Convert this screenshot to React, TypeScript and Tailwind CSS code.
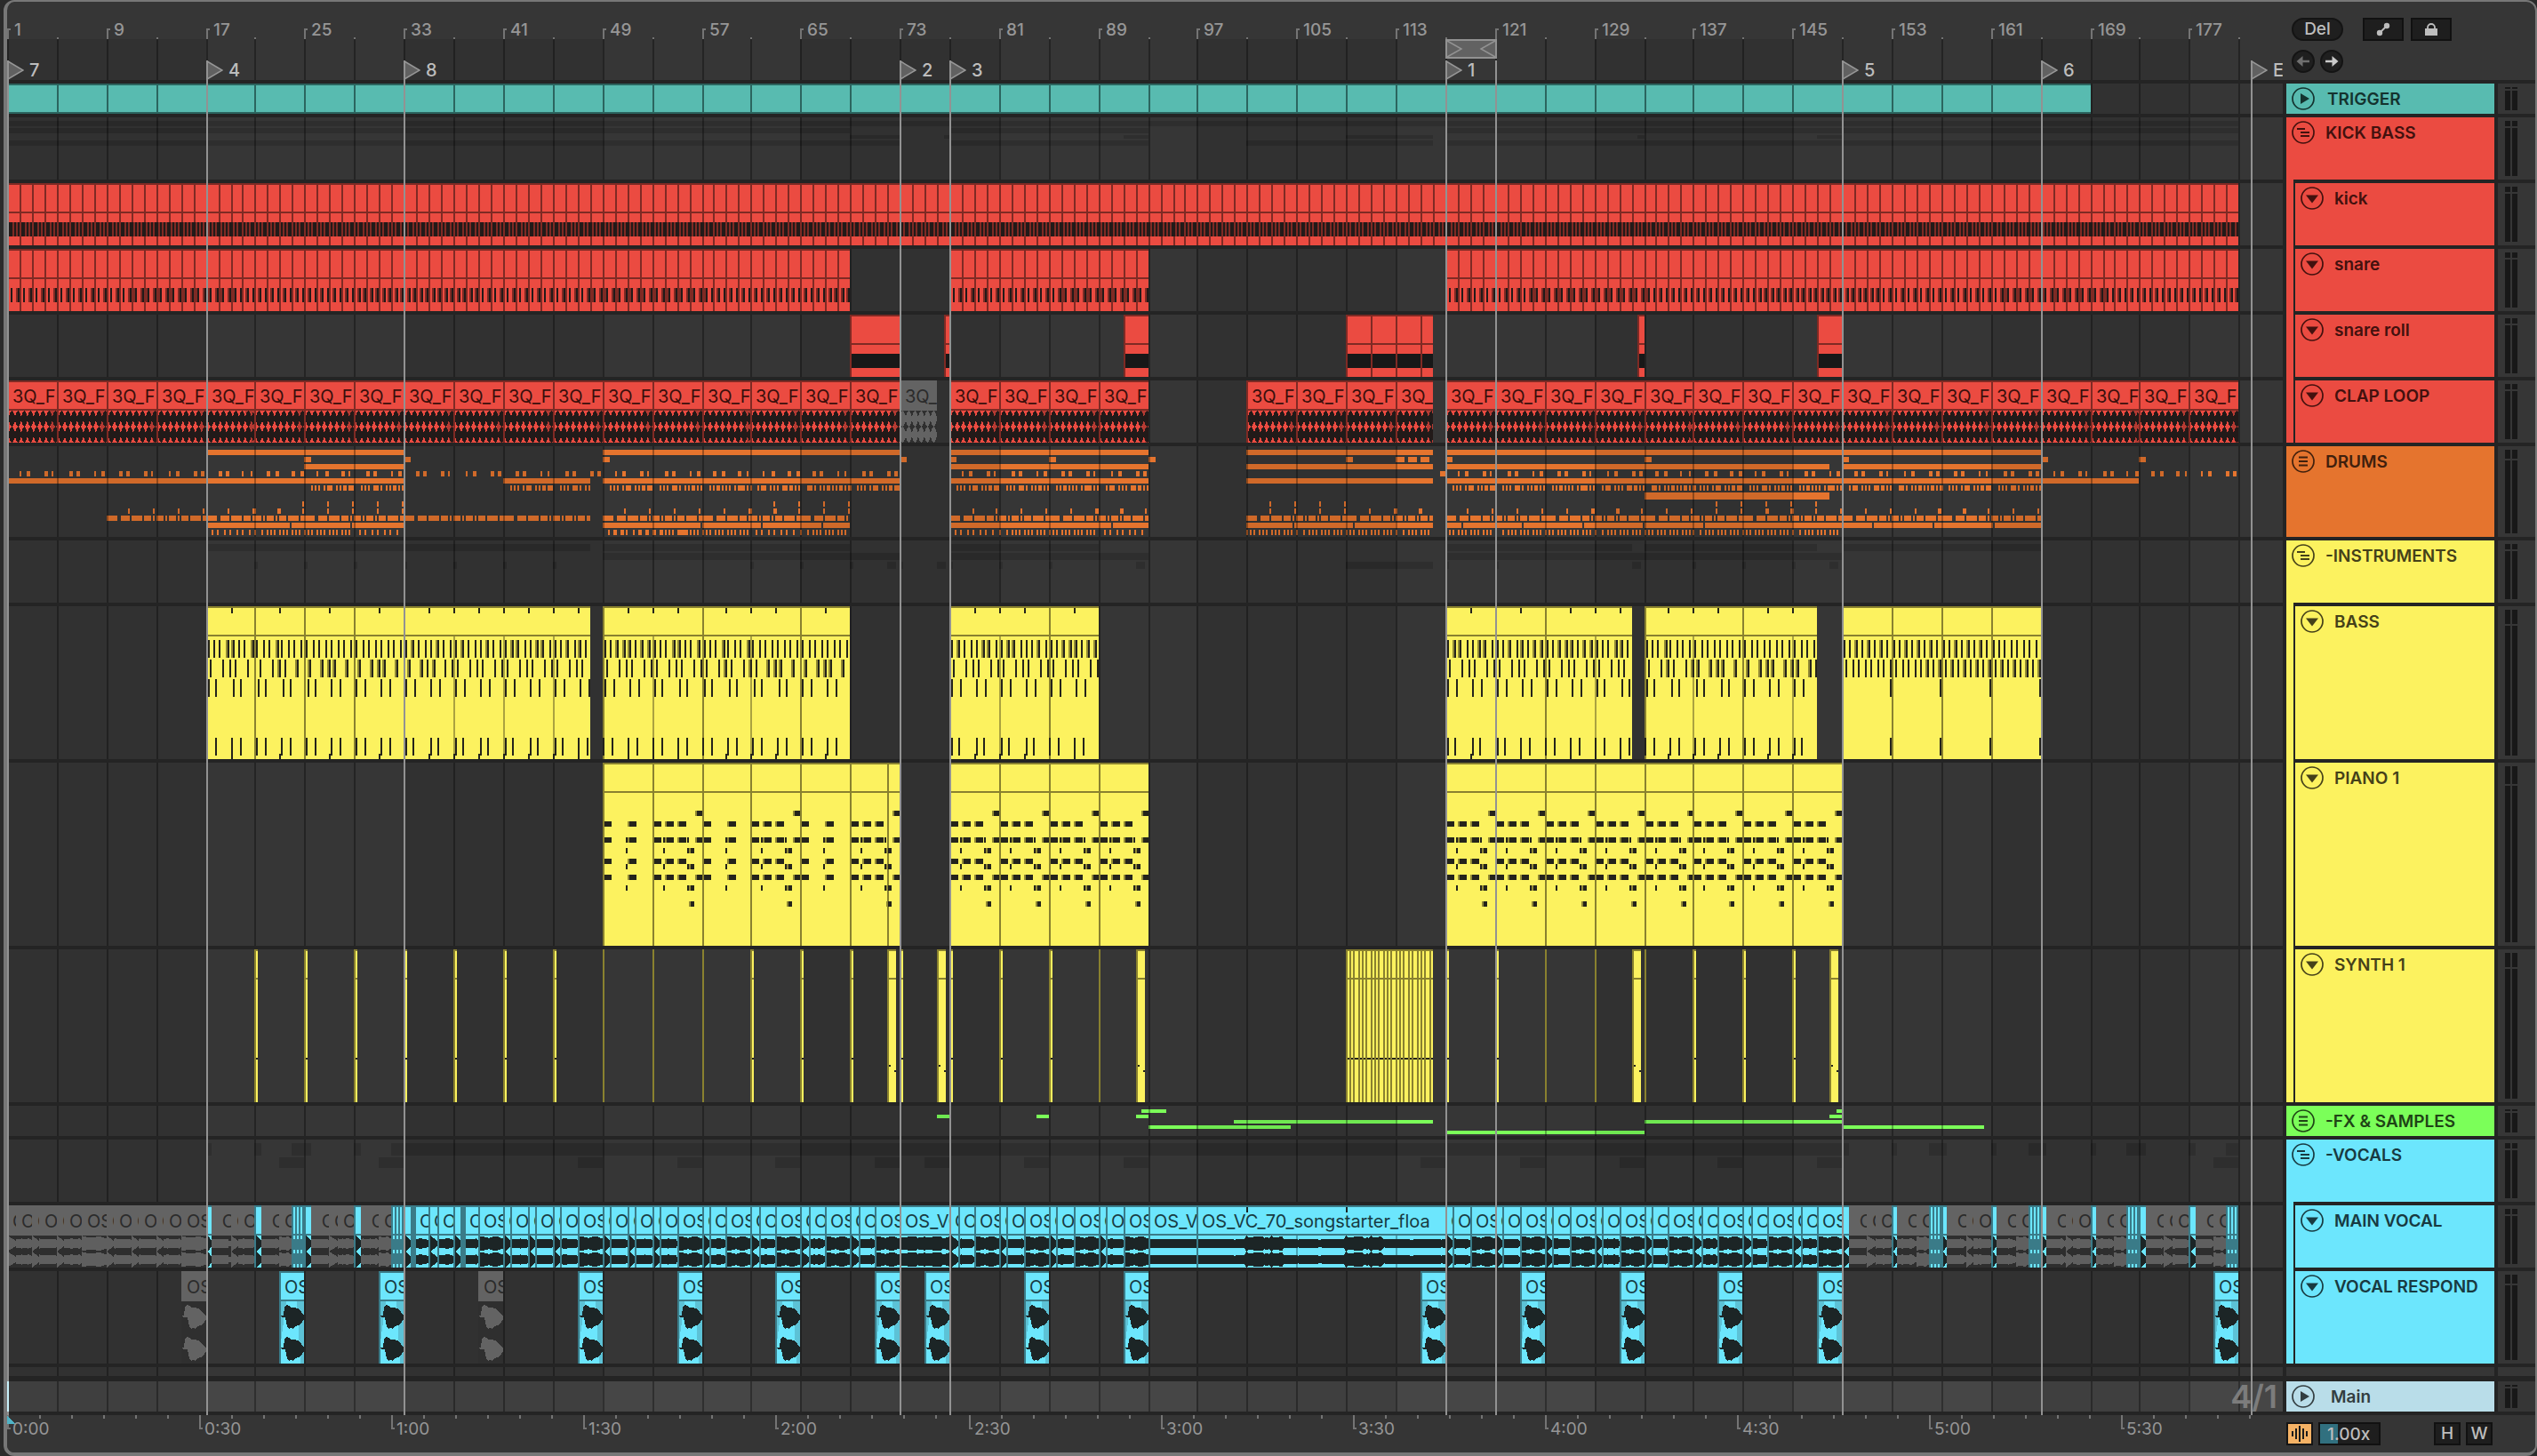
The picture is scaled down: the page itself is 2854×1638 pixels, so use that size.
import React from 'react';

/* ------------------------------------------------------------------ */
/* Timeline geometry                                                   */
/* ------------------------------------------------------------------ */

const LANE = 2560;
const BAR = 13.947;
const LAST_BAR = 181;

const snap = (v: number) => 2 * Math.round(v / 2);
const X = (bar: number) => snap((bar - 1) * BAR);
const pct = (v: number) => `${(v / LANE) * 100}%`;
const rect = (x: number, y: number, w: number, h: number) => `M${x} ${y}h${w}v${h}h${-w}z`;
const span = (a: number, b: number, y: number, h: number) => rect(X(a), y, X(b) - X(a), h);
const range = (from: number, to: number, step: number) => {
  const out: number[] = [];
  for (let v = from; v < to - 0.001; v += step) out.push(v);
  return out;
};

type Layer = { fill: string; d: string; opacity?: number };
type Label = { x: number; w: number; text: string; dim?: boolean };
type LaneArt = { under?: Layer[]; over?: Layer[]; labels?: Label[] };
type Span = [number, number];

const RED = { fill: '#eb4b41', edge: '#7f2a24', note: '#221a19' };
const YELLOW = { fill: '#fcf25f', edge: '#89812f', note: '#24231b' };
const CYAN = { fill: '#6ce6fd', edge: '#3a7b88', note: '#1c2526' };
const GREY = '#636363';

/* Outline of a clip: top edge, left edge and the line below its title. */
const edges = (x: number, w: number, h: number) =>
  rect(x, 0, w, 2) + rect(x, 0, 2, h) + (w > 2 ? rect(x, 32, w, 2) : '');

/* A mirrored waveform around cy. */
const wave = (x0: number, x1: number, cy: number, amp: (t: number, x: number) => number, step = 2) => {
  const top: string[] = [];
  const bottom: string[] = [];
  for (let x = x0; x <= x1; x += step) {
    const a = amp((x - x0) / (x1 - x0), x);
    top.push(`${x} ${(cy - a).toFixed(1)}`);
    bottom.unshift(`${x} ${(cy + a).toFixed(1)}`);
  }
  return `M${top.concat(bottom).join('L')}z`;
};
const jitter = (x: number) => Math.abs(Math.sin(x * 12.9898) * 43758.5453) % 1;

/* ------------------------------------------------------------------ */
/* Lane art                                                            */
/* ------------------------------------------------------------------ */

const trigger = (): LaneArt => {
  const starts = range(1, 169, 4);
  return {
    over: [
      { fill: '#58bbb0', d: span(1, 169, 0, 34) },
      { fill: '#2b655f', d: span(1, 169, 0, 2) + span(1, 169, 32, 2) + starts.map((b) => rect(X(b), 0, 2, 34)).join('') },
    ],
  };
};

const SNARE: Span[] = [[1, 69], [77, 93], [117, 181]];
const ROLLS: Span[] = [[69, 73], [76.6, 77], [91, 93], [109, 111], [111, 113], [113, 115], [115, 116], [132.5, 133], [147, 149]];
const CLAPS: Span[] = [[1, 73], [77, 93], [101, 116], [117, 181]];

const kickGroup = (): LaneArt => ({
  under: [
    {
      fill: '#2e2e2e',
      d:
        span(1, 181, 4, 6) +
        SNARE.map(([a, b]) => span(a, b, 12, 6)).join('') +
        ROLLS.map(([a, b]) => span(a, b, 20, 4)).join('') +
        CLAPS.map(([a, b]) => span(a, b, 26, 6)).join(''),
    },
  ],
});

const hits = (spans: Span[], beats: number[]): LaneArt => {
  let fill = '';
  let edge = '';
  let note = '';
  let noteEdge = '';
  spans.forEach(([a, b]) => {
    fill += span(a, b, 0, 70);
    range(a, b, 1).forEach((bar) => {
      edge += edges(X(bar), X(bar + 1) - X(bar), 70);
      beats.forEach((beat) => {
        const x0 = X(bar + beat / 4);
        const x1 = X(bar + (beat + 1) / 4);
        note += rect(x0, 44, x1 - x0, 16);
        if (x1 - x0 > 2) noteEdge += rect(x0, 44, 2, 16);
      });
    });
  });
  return {
    over: [
      { fill: RED.fill, d: fill },
      { fill: RED.edge, d: edge },
      { fill: RED.note, d: note },
      { fill: RED.edge, d: noteEdge },
    ],
  };
};

const snareRoll = (): LaneArt => ({
  over: [
    { fill: RED.fill, d: ROLLS.map(([a, b]) => span(a, b, 0, 70)).join('') },
    { fill: '#181818', d: ROLLS.map(([a, b]) => span(a, b, 44, 16)).join('') },
    { fill: RED.edge, d: ROLLS.map(([a, b]) => edges(X(a), X(b) - X(a), 70)).join('') },
  ],
});

const clapShape = (x0: number, x1: number) => {
  const shape: Span[] = [[0, 2.5], [0.28, 8], [0.5, 9], [0.74, 7]];
  const half = BAR / 2;
  return [43, 61]
    .map((cy) => {
      const top: string[] = [];
      const bottom: string[] = [];
      for (let s = x0; s < x1; s += half) {
        shape.forEach(([t, a]) => {
          const x = s + t * half;
          if (x <= x1) {
            top.push(`${x.toFixed(1)} ${cy - a}`);
            bottom.unshift(`${x.toFixed(1)} ${cy + a}`);
          }
        });
      }
      top.push(`${x1} ${cy - 4}`);
      bottom.unshift(`${x1} ${cy + 4}`);
      return `M${top.concat(bottom).join('L')}z`;
    })
    .join('');
};

const clapLoop = (): LaneArt => {
  const labels: Label[] = [];
  let edge = '';
  let body = '';
  let fade = '';
  CLAPS.forEach(([a, b]) =>
    range(a, b, 4).forEach((bar) => {
      const x0 = X(bar);
      const x1 = X(Math.min(bar + 4, b));
      edge += edges(x0, x1 - x0, 70);
      body += clapShape(x0 + 2, x1);
      fade += `M${x1 - 10} 34L${x1} 34V70H${x1 - 4}z`;
      labels.push({ x: x0, w: x1 - x0, text: '3Q_F' });
    }),
  );
  labels.push({ x: X(73), w: X(76) - X(73), text: '3Q_F', dim: true });
  return {
    over: [
      { fill: RED.fill, d: CLAPS.map(([a, b]) => span(a, b, 0, 70)).join('') },
      { fill: '#7f2a24', d: fade, opacity: 0.5 },
      { fill: RED.note, d: body },
      { fill: RED.edge, d: edge },
      { fill: GREY, d: span(73, 76, 0, 34) },
      { fill: '#2f2f2f', d: span(73, 76, 34, 36) },
      { fill: GREY, d: clapShape(X(73), X(76)) },
    ],
    labels,
  };
};

const drums = (): LaneArt => {
  let d = '';
  const full = (spans: Span[], y: number, h = 6) => spans.forEach(([a, b]) => (d += span(a, b, y, h)));
  full([[17, 33], [49, 73], [77, 93], [101, 116], [117, 165]], 4);
  [25, 33, 49, 73, 77, 85, 93, 109, 113, 114, 115, 117, 133, 149, 165, 173].forEach((b) => (d += rect(X(b), 12, b > 112.5 && b < 116 ? 10 : 8, 6)));
  full([[25, 33], [77, 93], [101, 116], [117, 148], [149, 165]], 20);
  ([[1, 73], [77, 93], [117, 181]] as Span[]).forEach(([a, b]) =>
    range(a, b, 2).forEach((bar, i) => {
      d += rect(X(bar + 1), 28, i % 3 ? 4 : 2, 6) + rect(X(bar + 1.6), 28, i % 4 === 1 ? 2 : 4, 6);
    }),
  );
  d += rect(X(116.6), 28, 6, 6);
  full([[1, 33], [41, 48], [49, 73], [77, 93], [101, 116], [117, 173]], 36);
  const ticks: Span[] = [[8, 2], [12, 2], [16, 2], [22, 2], [26, 2], [30, 2], [36, 2], [40, 2], [44, 4], [50, 2], [54, 2]];
  ([[25, 33], [41, 48], [49, 73], [77, 93], [117, 165]] as Span[]).forEach(([a, b]) =>
    range(a, b, 4).forEach((bar, i) =>
      ticks.forEach(([o, w], k) => {
        const x = X(bar) + o;
        if (x < X(b)) d += rect(x, 44, (i + k) % 5 === 4 ? 4 : w, 6);
      }),
    ),
  );
  full([[133, 148]], 52, 8);
  [24.8, 26.8, 28.8, 30.8, 32.8, 62.8, 64.8, 66.8, 68.8, 102.8, 104.8, 106.8, 108.8, 138.8, 140.8, 142.8, 144.8, 146.8].forEach(
    (b) => (d += rect(X(b), 62, 2, 6)),
  );
  ([[9, 33], [49, 69], [77, 93], [101, 116], [117, 165]] as Span[]).forEach(([a, b]) =>
    range(a, b, 2).forEach((bar, i) => {
      if (bar + 1.8 < b + 0.1) d += rect(X(bar + 1.8), 70, i % 7 > 4 ? 4 : 2, 6);
    }),
  );
  const dashA: Span[] = [[0, 12], [16, 10], [28, 12], [42, 8], [52, 2]];
  const dashB: Span[] = [[0, 8], [10, 2], [14, 8], [24, 2], [28, 8], [38, 12], [52, 4]];
  ([[9, 48], [49, 69], [77, 93], [101, 116], [117, 165]] as Span[]).forEach(([a, b]) =>
    range(a, b, 4).forEach((bar, i) =>
      (i % 2 ? dashB : dashA).forEach(([o, w]) => {
        const x = X(bar) + o;
        if (x < X(b)) d += rect(x, 78, Math.min(w, X(b) - x), 6);
      }),
    ),
  );
  const cuts = [318, 386, 780, 848, 916, 1242, 1446, 1514, 1636, 1704, 1772, 1840, 1908, 2098, 2166, 2234];
  ([[17, 33], [49, 69], [77, 93], [101, 116], [117, 165]] as Span[]).forEach(([a, b]) => {
    let x = X(a);
    cuts.filter((c) => c > x && c < X(b)).forEach((c) => {
      d += rect(x, 86, c - x, 6);
      x = c + 2;
    });
    d += rect(x, 86, X(b) - x, 6);
  });
  const stepA = [6, 12, 20, 26, 34, 40, 48];
  const stepB = [0, 8, 14, 18, 22, 28, 32, 36, 42, 46, 50];
  const stepC = [0, 4, 8, 14, 18, 22, 28, 32, 36, 42, 46, 50];
  ([[17, 33], [49, 69], [77, 93], [101, 116], [117, 149]] as Span[]).forEach(([a, b]) =>
    range(a, b, 4).forEach((bar, i) =>
      [stepA, stepB, stepC][a > 100 ? 2 - (i % 2) : i % 3].forEach((o) => {
        const x = X(bar) + o;
        if (x < X(b)) d += rect(x, 94, a === 49 && i < 2 && o % 4 === 0 ? 4 : 2, 6);
      }),
    ),
  );
  return { under: [{ fill: '#e5742e', d }] };
};

type BassClip = { a: number; b: number; loops?: number[]; busy?: boolean };
const BASS: BassClip[] = [
  { a: 17, b: 21 }, { a: 21, b: 25 }, { a: 25, b: 29 }, { a: 29, b: 33 },
  { a: 33, b: 48, loops: [37, 41, 45] },
  { a: 49, b: 57, loops: [53] }, { a: 57, b: 65, loops: [61] }, { a: 65, b: 69 },
  { a: 77, b: 85, loops: [81] }, { a: 85, b: 89 },
  { a: 117, b: 121 }, { a: 121, b: 125 }, { a: 125, b: 132, loops: [129] },
  { a: 133, b: 141, loops: [137] }, { a: 141, b: 147, loops: [145] },
  { a: 149, b: 153, busy: true }, { a: 153, b: 157, busy: true }, { a: 157, b: 161, busy: true }, { a: 161, b: 165, busy: true },
];

const bass = (): LaneArt => {
  let note = '';
  let noteEdge = '';
  let loop = '';
  const put = (bar: number, y: number, h: number, len: number, end: number) => {
    const x0 = X(bar);
    const x1 = Math.max(x0 + 2, X(bar + len));
    if (x1 > X(end)) return;
    note += rect(x1 - 2, y, 2, h);
    if (x1 - x0 > 2) noteEdge += rect(x0, y, x1 - x0 - 2, h);
  };
  BASS.forEach(({ a, b, loops, busy }) => {
    (loops ?? []).forEach((l) => (loop += rect(X(l), 34, 2, 138)));
    if (busy) {
      range(a, b, 0.5).forEach((t) => {
        put(t + 0.05, 38, 20, 0.2, b);
        put(t + 0.3, 60, 20, 0.19, b);
      });
      put(b - 0.15, 82, 20, 0.1, b);
      put(b - 0.15, 148, 20, 0.1, b);
      return;
    }
    range(a, b, 2).forEach((t) => {
      [0.1, 0.62, 1.08, 1.68].forEach((o) => put(t + o, 38, 20, 0.19, b));
      [0.3, 1.3, 1.86].forEach((o) => put(t + o, 60, 20, 0.19, b));
      [0.17, 0.84].forEach((o) => put(t + o, 82, 20, 0.12, b));
      [0.1, 0.76].forEach((o) => put(t + o, 148, 20, 0.12, b));
      if (t > a) note += rect(X(t), 2, 2, 6) + rect(X(t), 166, 2, 6);
    });
  });
  return {
    over: [
      { fill: YELLOW.fill, d: BASS.map(({ a, b }) => span(a, b, 0, 172)).join('') },
      { fill: '#aaa240', d: loop },
      { fill: YELLOW.edge, d: BASS.map(({ a, b }) => edges(X(a), X(b) - X(a), 172)).join('') },
      { fill: '#928a35', d: noteEdge },
      { fill: YELLOW.note, d: note },
    ],
  };
};

const PIANO: Span[] = [
  [49, 53], [53, 57], [57, 61], [61, 65], [65, 69], [69, 72], [72, 73],
  [77, 81], [81, 85], [85, 89], [89, 93],
  [117, 121], [121, 125], [125, 129], [129, 133], [133, 137], [137, 141], [141, 145], [145, 149],
];

const piano = (): LaneArt => {
  let note = '';
  let noteEdge = '';
  const put = (x: number, w: number, ys: number[], lead = true) =>
    ys.forEach((y) => {
      note += rect(x, y, w, 6);
      if (lead && w > 3) noteEdge += rect(x, y, 2, 6);
    });
  const chord = [66, 84, 108, 126];
  const low = [96, 114, 138];
  [49, 57, 65].forEach((b) => {
    const x = X(b);
    put(x + 2, 8, chord, false);
    put(x + 28, 10, chord);
    put(x + 26, 2, [84, ...low]);
  });
  [53, 61, 69, 77, 81, 85, 89, 117, 121, 125, 129, 133, 137, 141, 145].forEach((b) => {
    const x = X(b);
    put(x + 2, 8, chord, false);
    put(x + 14, 10, chord);
    put(x + 28, 10, chord);
    put(x + 12, 2, [84, ...low]);
    put(x + 39, 2, [84, ...low]);
    put(x + 41, 6, [...low, 156]);
    put(x + 48, X(b + 4) - x - 48, [54, 84, 126]);
  });
  return {
    over: [
      { fill: YELLOW.fill, d: PIANO.map(([a, b]) => span(a, b, 0, 206)).join('') },
      { fill: YELLOW.edge, d: PIANO.map(([a, b]) => edges(X(a), X(b) - X(a), 206)).join('') },
      { fill: YELLOW.note, d: note },
      { fill: '#928a35', d: noteEdge },
    ],
  };
};

const STABS = [21, 25, 29, 33, 37, 41, 45, 61, 65, 69, 73, 77, 81, 85, 117, 121, 137, 141, 145];
const SLIVERS = [49, 53, 57, 89, 125, 129, 133];
const FILLS = [72, 76, 92, 132, 148];

const synth = (): LaneArt => {
  let fill = '';
  let edge = '';
  let note = '';
  STABS.forEach((b) => {
    fill += rect(X(b), 0, 4, 172);
    edge += edges(X(b), 4, 172);
    note += rect(X(b) + 2, 122, 2, 2);
  });
  SLIVERS.forEach((b) => (edge += rect(X(b), 0, 2, 172)));
  FILLS.forEach((b) => {
    fill += rect(X(b), 0, 10, 172);
    edge += edges(X(b), 10, 172);
    note += rect(X(b) + 2, 130, 2, 2) + rect(X(b) + 8, 136, 2, 2);
  });
  edge += span(109, 116, 0, 172);
  let comb = '';
  range(109, 116, 0.25).forEach((b) => {
    comb += rect(X(b) + 2, 2, 2, 30) + rect(X(b) + 2, 34, 2, 138);
    note += rect(X(b) + 2, 122, 2, 2);
  });
  return {
    over: [
      { fill: YELLOW.fill, d: fill },
      { fill: YELLOW.edge, d: edge },
      { fill: YELLOW.fill, d: comb },
      { fill: YELLOW.note, d: note },
    ],
  };
};

const instruments = (): LaneArt => ({
  under: [
    {
      fill: '#2e2e2e',
      d:
        ([[17, 48], [49, 69], [77, 89], [117, 132], [133, 147], [149, 165]] as Span[]).map(([a, b]) => span(a, b, 4, 8)).join('') +
        ([[49, 73], [77, 93], [117, 149]] as Span[]).map(([a, b]) => span(a, b, 14, 8)).join('') +
        STABS.map((b) => rect(X(b), 24, 4, 8)).join('') +
        FILLS.map((b) => rect(X(b), 24, 10, 8)).join('') +
        span(109, 116, 24, 8),
    },
  ],
});

const fx = (): LaneArt => ({
  under: [
    {
      fill: '#7bff59',
      d:
        span(92.5, 94.5, 4, 4) + span(148.5, 149, 4, 4) +
        ([[76, 77], [84, 85], [92, 93], [148, 149]] as Span[]).map(([a, b]) => span(a, b, 10, 4)).join('') +
        span(100, 116, 16, 4) + span(133, 149, 16, 4) +
        span(93, 104.5, 22, 4) + span(149, 160.5, 22, 4) +
        span(117, 133, 28, 4),
    },
  ],
});

const RESPONDS: { a: number; dim?: boolean }[] = [
  { a: 15, dim: true }, { a: 23 }, { a: 31 }, { a: 39, dim: true }, { a: 47 }, { a: 55 }, { a: 63 }, { a: 71 },
  { a: 75 }, { a: 83 }, { a: 91 }, { a: 115 }, { a: 123 }, { a: 131 }, { a: 139 }, { a: 147 }, { a: 179 },
];

const vocals = (): LaneArt => ({
  under: [
    {
      fill: '#2e2e2e',
      d:
        span(17, 17.5, 4, 14) + span(21, 21.5, 4, 14) + span(24, 25.5, 4, 14) + span(29, 29.5, 4, 14) +
        span(32, 149.5, 4, 14) +
        [153, 161, 169, 177].map((b) => span(b, b + 0.5, 4, 14)).join('') +
        [156, 164, 172].map((b) => span(b, b + 1.5, 4, 14)).join('') +
        span(180, 181, 4, 14) +
        RESPONDS.filter((r) => !r.dim).map(({ a }) => span(a, a + 2, 20, 12)).join(''),
    },
  ],
});

type Shape = 'short' | 'long' | 'full' | 'steady' | 'lead';
type VocalClip = { a: number; b: number; shape: Shape; text: string; dim?: boolean };

const vocalClips = (): { clips: VocalClip[]; stripes: Span[] } => {
  const clips: VocalClip[] = [];
  const stripes: Span[] = [];
  const add = (a: number, b: number, shape: Shape, text: string, dim?: boolean) => clips.push({ a, b, shape, text, dim });
  const pair = (a: number, dim?: boolean) => {
    add(a, a + 0.65, 'short', 'OS', dim);
    add(a + 0.65, a + 2, 'long', 'OS', dim);
  };
  [1, 9].forEach((s) => {
    [0, 2, 4].forEach((o) => pair(s + o, true));
    add(s + 6, s + 8, 'full', 'OS', true);
  });
  [17, 25, 149, 157, 165, 173].forEach((s) => {
    add(s, s + 0.5, 'short', '');
    add(s + 0.5, s + 2, 'long', ' OS', true);
    add(s + 2, s + 2.65, 'short', 'OS', true);
    add(s + 2.65, s + 4, 'long', 'OS', true);
    add(s + 4, s + 4.5, 'short', '');
    add(s + 4.5, s + 6, 'long', ' OS', true);
    add(s + 6, s + 7, 'full', 'OS', true);
    stripes.push([s + 7, s + 8]);
  });
  add(33, 33.6, 'short', '');
  stripes.push([33.6, 33.8]);
  add(33.8, 35, 'long', 'OS');
  pair(35);
  add(37, 37.6, 'short', '');
  stripes.push([37.6, 37.8]);
  add(37.8, 39, 'long', 'OS');
  add(39, 41, 'full', 'OS');
  [41, 49].forEach((s) => {
    [0, 2, 4].forEach((o) => pair(s + o));
    add(s + 6, s + 8, 'full', 'OS');
  });
  [...range(57, 73, 4), ...range(77, 93, 4), ...range(117, 149, 4)].forEach((s) => {
    pair(s);
    add(s + 2, s + 4, 'full', 'OS');
  });
  add(73, 77, 'full', 'OS_VC');
  add(93, 97, 'steady', 'OS_VC');
  add(97, 117, 'lead', 'OS_VC_70_songstarter_floa');
  return { clips, stripes };
};

const vocalAmp = (shape: Shape, x0: number, x1: number) => (t: number, x: number) => {
  const n = jitter(x);
  const swell = (p: number) => {
    const f = ((p % 28) + 28) % 28;
    return f < 2 ? 9 : f < 10 ? 6.5 + n : f < 20 ? 8 + n * 0.6 : 6 + n;
  };
  if (shape === 'short') return Math.max(2.5, 9 - t * 6);
  if (shape === 'long') return 4.6 + n * 1.2 - (t > 0.9 ? 2 : 0);
  if (shape === 'full') return x1 - x0 > 40 ? swell(x - x0) : t < 0.4 ? 8.6 - t * 6 : t < 0.7 ? 6.4 + (t - 0.4) * 7 : 8.4 - (t - 0.7) * 10;
  if (shape === 'steady') return 4.4 + n;
  const rel = x - X(101);
  const rel2 = x - X(109);
  if (rel >= 0 && rel < 42) return swell(rel);
  if (rel2 >= 0 && rel2 < 42) return swell(rel2);
  return 4.4 + n;
};

const mainVocal = (): LaneArt => {
  const { clips, stripes } = vocalClips();
  const labels: Label[] = [];
  const p = { greyHead: '', greyBody: '', greyWave: '', fill: '', edge: '', dark: '', stripe: '' };
  clips.forEach(({ a, b, shape, text, dim }) => {
    const x0 = X(a);
    const x1 = X(b);
    const w = x1 - x0;
    const body = [43, 61].map((cy) => wave(dim ? x0 : x0 + 2, x1, cy, vocalAmp(shape, x0, x1))).join('');
    if (dim) {
      p.greyHead += rect(x0, 0, w, 34);
      p.greyBody += rect(x0, 34, w, 36);
      p.greyWave += body;
    } else {
      p.fill += rect(x0, 0, w, 70);
      p.edge += edges(x0, w, 70);
      p.dark += body;
    }
    if (text) labels.push({ x: x0, w, text, dim });
  });
  stripes.forEach(([a, b]) => {
    const x0 = X(a);
    const x1 = X(b);
    p.edge += rect(x0, 0, x1 - x0, 70);
    for (let x = x0 + 2; x < x1 - 2; x += 4) p.stripe += rect(x, 2, 2, 30) + rect(x, 34, 2, 4) + rect(x, 50, 2, 4) + rect(x, 66, 2, 4);
  });
  return {
    over: [
      { fill: GREY, d: p.greyHead },
      { fill: '#2e2e2e', d: p.greyBody },
      { fill: '#5f5f5f', d: p.greyWave },
      { fill: CYAN.fill, d: p.fill },
      { fill: '#4aa5b6', d: rect(X(105), 34, 2, 36) + rect(X(113), 34, 2, 36) },
      { fill: CYAN.note, d: p.dark + rect(X(101), 2, 2, 6) + rect(X(109), 2, 2, 6) },
      { fill: CYAN.edge, d: p.edge },
      { fill: CYAN.fill, d: p.stripe },
    ],
    labels,
  };
};

const respond = (): LaneArt => {
  const p = { grey: '', greyBody: '', greyWave: '', fill: '', shade: '', edge: '', dark: '' };
  const labels: Label[] = [];
  const blob = (x: number, e: number) =>
    [51, 87]
      .map(
        (c) =>
          `M${x + 2} ${c - 1}h3l1 -9l2 -3l3 1l3 2l3 0l3 1l3 1l2 3L${e} ${c - 1}V${c + 3}L${e - 3} ${c + 8}l-3 2l-4 1l-2 3l-3 -1l-2 1l-2 -3l-2 -10h-4z`,
      )
      .join('');
  RESPONDS.forEach(({ a, dim }) => {
    const x0 = X(a);
    const x1 = X(a + 2);
    labels.push({ x: x0, w: x1 - x0, text: 'OS', dim });
    if (dim) {
      p.grey += rect(x0, 0, x1 - x0, 34);
      p.greyBody += rect(x0, 34, x1 - x0, 70);
      p.greyWave += blob(x0 - 2, x1);
    } else {
      p.fill += rect(x0, 0, x1 - x0, 104);
      p.shade += `M${x1 - 8} 34H${x1}V104h-4zM${x0 + 2} 34h6L${x0 + 2} 80z`;
      p.edge += edges(x0, x1 - x0, 104);
      p.dark += blob(x0, x1);
    }
  });
  return {
    over: [
      { fill: GREY, d: p.grey },
      { fill: '#2f2f2f', d: p.greyBody },
      { fill: GREY, d: p.greyWave },
      { fill: CYAN.fill, d: p.fill },
      { fill: '#5cc2d6', d: p.shade },
      { fill: CYAN.edge, d: p.edge },
      { fill: CYAN.note, d: p.dark },
    ],
    labels,
  };
};

/* ------------------------------------------------------------------ */
/* Track data                                                          */
/* ------------------------------------------------------------------ */

type IconKind = 'play' | 'group' | 'folded' | 'open';
type Track = {
  name: string;
  h: number;
  height: string;
  color: string;
  strip?: string;
  ink: string;
  icon: IconKind;
  label: string;
  peak: string;
  art: LaneArt;
  text?: string;
};

const red = { color: 'bg-[#eb4b41]', strip: 'bg-[#eb4b41]', ink: 'text-[#43110e]' };
const yellow = { color: 'bg-[#fcf25f]', strip: 'bg-[#fcf25f]', ink: 'text-[#454119]' };
const cyan = { color: 'bg-[#6ce6fd]', strip: 'bg-[#6ce6fd]', ink: 'text-[#183a41]' };

const TRACKS: Track[] = [
  { name: 'TRIGGER', h: 34, height: 'h-[34px]', color: 'bg-[#58bbb0]', ink: 'text-[#14332f]', icon: 'play', label: 'ml-3.5', peak: 'h-0.5', art: trigger() },
  { name: 'KICK BASS', h: 70, height: 'h-[70px]', color: red.color, ink: red.ink, icon: 'group', label: 'ml-3', peak: 'h-1.5', art: kickGroup() },
  { name: 'kick', h: 70, height: 'h-[70px]', ...red, icon: 'open', label: 'ml-3', peak: 'h-1.5', art: hits([[1, 181]], [0, 1, 2, 3]) },
  { name: 'snare', h: 70, height: 'h-[70px]', ...red, icon: 'open', label: 'ml-3', peak: 'h-1.5', art: hits(SNARE, [1, 3]) },
  { name: 'snare roll', h: 70, height: 'h-[70px]', ...red, icon: 'open', label: 'ml-3', peak: 'h-1.5', art: snareRoll() },
  { name: 'CLAP LOOP', h: 70, height: 'h-[70px]', ...red, icon: 'open', label: 'ml-3', peak: 'h-1.5', art: clapLoop(), text: 'text-[#3a0f0c]' },
  { name: 'DRUMS', h: 102, height: 'h-[102px]', color: 'bg-[#e5742e]', ink: 'text-[#40200d]', icon: 'folded', label: 'ml-3', peak: 'h-2.5', art: drums() },
  { name: '-INSTRUMENTS', h: 70, height: 'h-[70px]', color: yellow.color, ink: yellow.ink, icon: 'group', label: 'ml-3', peak: 'h-1.5', art: instruments() },
  { name: 'BASS', h: 172, height: 'h-[172px]', ...yellow, icon: 'open', label: 'ml-3', peak: 'h-4', art: bass() },
  { name: 'PIANO 1', h: 206, height: 'h-[206px]', ...yellow, icon: 'open', label: 'ml-3', peak: 'h-5', art: piano() },
  { name: 'SYNTH 1', h: 172, height: 'h-[172px]', ...yellow, icon: 'open', label: 'ml-3', peak: 'h-4', art: synth() },
  { name: '-FX & SAMPLES', h: 34, height: 'h-[34px]', color: 'bg-[#7bff59]', ink: 'text-[#1f4416]', icon: 'folded', label: 'ml-3', peak: 'h-0.5', art: fx() },
  { name: '-VOCALS', h: 70, height: 'h-[70px]', color: cyan.color, ink: cyan.ink, icon: 'group', label: 'ml-3', peak: 'h-1.5', art: vocals() },
  { name: 'MAIN VOCAL', h: 70, height: 'h-[70px]', ...cyan, icon: 'open', label: 'ml-3', peak: 'h-1.5', art: mainVocal(), text: 'text-[#173b42]' },
  { name: 'VOCAL RESPOND', h: 104, height: 'h-[104px]', ...cyan, icon: 'open', label: 'ml-3', peak: 'h-2.5', art: respond(), text: 'text-[#173b42]' },
];

const LOCATORS = [
  { bar: 1, name: '7' },
  { bar: 17, name: '4' },
  { bar: 33, name: '8' },
  { bar: 73, name: '2' },
  { bar: 77, name: '3' },
  { bar: 117, name: '1' },
  { bar: 149, name: '5' },
  { bar: 165, name: '6' },
  { bar: 182, name: 'E' },
];

const TIMES = ['0:00', '0:30', '1:00', '1:30', '2:00', '2:30', '3:00', '3:30', '4:00', '4:30', '5:00', '5:30'];

/* ------------------------------------------------------------------ */
/* Timeline                                                            */
/* ------------------------------------------------------------------ */

const SHADED: Span[] = [[1, 17], [33, 49], [65, 81], [97, 113], [129, 145], [161, 177]];
const GRID = range(1, LAST_BAR + 1, 4);

function LaneSvg({ h, art }: { h: number; art?: LaneArt }) {
  return (
    <svg className="block h-full w-full" viewBox={`0 0 ${LANE} ${h}`} preserveAspectRatio="none" shapeRendering="crispEdges" aria-hidden="true">
      {art?.under?.map((l, i) => <path key={i} fill={l.fill} d={l.d} />)}
      <path fill="#000" opacity={0.09} d={SHADED.map(([a, b]) => span(a, b, 0, h)).join('')} />
      <path fill="#000" opacity={0.32} d={GRID.map((b) => rect(X(b), 0, 2, h)).join('')} />
      {art?.over?.map((l, i) => <path key={i} fill={l.fill} d={l.d} opacity={l.opacity} />)}
    </svg>
  );
}

function Lane({ track }: { track: Track }) {
  return (
    <div className={`relative bg-[#363636] ${track.height}`}>
      <LaneSvg h={track.h} art={track.art} />
      {track.art.labels?.map((l, i) => (
        <span
          key={i}
          className={`absolute top-0.5 overflow-hidden pl-1.5 text-[20px] leading-[32px] whitespace-pre ${l.dim ? 'text-[#2b2b2b]' : track.text}`}
          style={{ left: pct(l.x), width: pct(l.w) }}
        >
          {l.text}
        </span>
      ))}
    </div>
  );
}

function BarRuler() {
  const minor = range(5, LAST_BAR + 1, 8);
  const major = range(1, LAST_BAR, 8);
  return (
    <div className="relative h-[42px]">
      <svg className="block h-full w-full" viewBox={`0 0 ${LANE} 42`} preserveAspectRatio="none" shapeRendering="crispEdges" aria-hidden="true">
        <path
          fill="#747474"
          d={major.map((b) => rect(X(b), 30, 2, 12) + rect(X(b), 30, 4, 2)).join('') + minor.map((b) => rect(X(b), 40, 2, 2)).join('')}
        />
      </svg>
      {major.map((b) => (
        <span key={b} className="absolute bottom-0 pl-2 text-[19px] leading-5 font-medium text-[#969696]" style={{ left: pct(X(b)) }}>
          {b}
        </span>
      ))}
    </div>
  );
}

function LocatorBar() {
  return (
    <div className="relative h-[46px] bg-[#363636]">
      <LaneSvg h={46} />
      <button type="button" aria-label="Loop brace" className="absolute top-0 block h-[22px]" style={{ left: pct(X(117)), width: pct(X(121) + 2 - X(117)) }}>
        <svg className="block h-full w-full" viewBox="0 0 58 22" aria-hidden="true">
          <path d="M1 1H57V21H1z" fill="#626262" stroke="#929292" strokeWidth="2" />
          <path d="M2 2L18 11L2 20M56 2L40 11L56 20" fill="none" stroke="#929292" strokeWidth="1.5" />
        </svg>
      </button>
      {LOCATORS.map((l) => (
        <button key={l.name} type="button" className="absolute bottom-0 flex items-center gap-1.5" style={{ left: pct(X(l.bar)) }}>
          <svg className="block h-[22px] w-[19px]" viewBox="0 0 19 22" aria-hidden="true">
            <path d="M1 1L18 11L1 21z" fill="#616161" stroke="#969696" strokeWidth="1.5" />
          </svg>
          <span className="text-[20px] leading-[22px] font-medium text-[#bdbdbd]">{l.name}</span>
        </button>
      ))}
    </div>
  );
}

function TimeRuler() {
  const step = 216.2;
  return (
    <div className="relative h-[42px] bg-[#353535]">
      <svg className="block h-full w-full" viewBox={`0 0 ${LANE} 42`} preserveAspectRatio="none" shapeRendering="crispEdges" aria-hidden="true">
        <path
          fill="#747474"
          d={
            TIMES.map((_, i) => rect(snap(i * step), 0, 2, 16) + rect(snap(i * step), 14, 4, 2)).join('') +
            range(0, 71, 1).map((i) => rect(snap((i * step) / 6), 0, 2, 4)).join('')
          }
        />
        <path fill="#4fb3c6" d="M0 0L9 10H0z" />
      </svg>
      {TIMES.map((t, i) => (
        <span key={t} className="absolute top-1 pl-1.5 text-[19px] leading-6 text-[#969696]" style={{ left: pct(snap(i * step)) }}>
          {t}
        </span>
      ))}
    </div>
  );
}

function LocatorLines() {
  return (
    <div className="pointer-events-none absolute inset-x-0 top-[66px] bottom-[42px]">
      {[...LOCATORS.map((l) => l.bar), 121].map((b) => (
        <i key={b} className="absolute inset-y-0 w-0.5 bg-[#929292]" style={{ left: pct(X(b)) }} />
      ))}
    </div>
  );
}

function Timeline() {
  return (
    <section aria-label="Arrangement" className="relative min-w-0 flex-1 overflow-hidden">
      <BarRuler />
      <LocatorBar />
      <div className="flex flex-col gap-1 bg-[#242424] py-1">
        {TRACKS.map((t) => (
          <Lane key={t.name} track={t} />
        ))}
        <div className="h-2.5 bg-[#363636]">
          <LaneSvg h={10} />
        </div>
        <div className="relative mt-0.5 h-[34px] bg-[#464646]">
          <LaneSvg h={34} />
          <i className="absolute inset-y-0 left-0 z-10 w-0.5 bg-[#c8f1fa]" />
          <span className="absolute top-0 right-1.5 text-[36px] leading-[34px] font-semibold text-[#7c7c7c]">4/1</span>
        </div>
      </div>
      <TimeRuler />
      <LocatorLines />
    </section>
  );
}

/* ------------------------------------------------------------------ */
/* Track headers                                                       */
/* ------------------------------------------------------------------ */

function TrackIcon({ kind }: { kind: IconKind }) {
  return (
    <svg className="block h-[26px] w-[26px]" viewBox="0 0 26 26" aria-hidden="true">
      <circle cx="13" cy="13" r="12" fill="none" stroke="currentColor" strokeWidth="1.7" />
      {kind === 'play' && <path d="M10 7L20 13L10 19z" fill="currentColor" />}
      {kind === 'open' && <path d="M6 9.5H20L13 18.5z" fill="currentColor" />}
      {kind === 'folded' && <path d="M8 8.5H18M8 13H18M8 17.5H18" stroke="currentColor" strokeWidth="1.8" />}
      {kind === 'group' && <path d="M6 9H15M10 13H20M10 17H20" stroke="currentColor" strokeWidth="1.8" />}
    </svg>
  );
}

function Meter({ peak }: { peak: string }) {
  return (
    <div className="flex w-[42px] gap-0.5 bg-[#363636] py-1 pl-2" aria-hidden="true">
      {[0, 1].map((i) => (
        <div key={i} className="flex w-1.5 flex-col gap-0.5">
          <div className={`bg-[#181818] ${peak}`} />
          <div className="flex-1 bg-[#181818]" />
        </div>
      ))}
    </div>
  );
}

function HeaderRow({ track }: { track: Omit<Track, 'art' | 'h'> }) {
  const child = Boolean(track.strip);
  return (
    <div className={`flex gap-1 ${track.height}`}>
      <div className="flex min-w-0 flex-1 gap-0.5">
        {child && <div className={`-mt-1 w-2 ${track.strip}`} />}
        <div className={`flex min-w-0 flex-1 items-start pt-1 pl-1.5 ${track.color} ${track.ink}`}>
          <button type="button" aria-label={`Unfold ${track.name}`}>
            <TrackIcon kind={track.icon} />
          </button>
          <span className={`text-[19px] leading-[28px] font-semibold whitespace-nowrap ${track.label}`}>{track.name}</span>
        </div>
      </div>
      <Meter peak={track.peak} />
    </div>
  );
}

function TopControls() {
  return (
    <div className="flex h-[88px] flex-col gap-2.5 pt-[18px] pl-2.5">
      <div className="flex h-[26px]">
        <button type="button" className="w-[58px] rounded-full border-2 border-[#141414] bg-[#1f1f1f] text-[19px] leading-[22px] font-medium text-[#bdbdbd]">
          Del
        </button>
        <button type="button" aria-label="Automation mode" className="ml-[22px] flex w-[46px] items-center justify-center border-2 border-[#111111] bg-[#1e1e1e]">
          <svg className="h-4 w-4" viewBox="0 0 16 16" aria-hidden="true">
            <path d="M4 12L12 4" stroke="#bdbdbd" strokeWidth="2" />
            <circle cx="4" cy="12" r="3.2" fill="#bdbdbd" />
            <circle cx="12" cy="4" r="3.2" fill="#bdbdbd" />
          </svg>
        </button>
        <button type="button" aria-label="Lock envelopes" className="ml-2 flex w-[46px] items-center justify-center border-2 border-[#111111] bg-[#1e1e1e]">
          <svg className="h-4 w-4" viewBox="0 0 16 16" aria-hidden="true">
            <path d="M4 8V6A4 4 0 0 1 12 6V8" fill="none" stroke="#bdbdbd" strokeWidth="1.8" />
            <path d="M1 7H15V15H1z" fill="#bdbdbd" />
          </svg>
        </button>
      </div>
      <div className="flex gap-1.5">
        {[false, true].map((next) => (
          <button key={String(next)} type="button" aria-label={next ? 'Next locator' : 'Previous locator'} className={`h-[26px] w-[26px] rounded-full border-2 border-[#141414] bg-[#1f1f1f] ${next ? 'text-[#cacaca]' : 'text-[#6f6f6f]'}`}>
            <svg className={`h-[22px] w-[22px] ${next ? '' : 'rotate-180'}`} viewBox="0 0 22 22" aria-hidden="true">
              <path d="M4 11H13" stroke="currentColor" strokeWidth="2.4" />
              <path d="M11.5 5L18.5 11L11.5 17z" fill="currentColor" />
            </svg>
          </button>
        ))}
      </div>
    </div>
  );
}

function BottomControls() {
  return (
    <div className="flex h-[42px] items-start bg-[#353535] pt-2 pl-1">
      <button type="button" aria-label="Waveform zoom" className="h-[26px] w-[30px] border-2 border-[#151515] bg-[#f5b265]">
        <svg className="block h-[22px] w-[26px]" viewBox="0 0 26 22" aria-hidden="true">
          <path d="M5 8V14M9 5V17M13 2V20M17 5V17M21 8V14" stroke="#1b1b1b" strokeWidth="2" />
        </svg>
      </button>
      <input
        aria-label="Track height ratio"
        defaultValue="1.00x"
        className="ml-1.5 h-[26px] w-[70px] border-2 border-[#111111] bg-[#1e1e1e] bg-linear-to-r from-[#31707f] from-30% to-[#1e1e1e] to-30% pl-2 text-[19px] leading-[22px] font-medium text-[#bdbdbd]"
      />
      <button type="button" className="ml-auto h-[26px] w-[30px] border-2 border-[#111111] bg-[#1e1e1e] text-[19px] leading-[22px] font-medium text-[#bdbdbd]">
        H
      </button>
      <button type="button" className="mr-12 ml-1.5 h-[26px] w-[30px] border-2 border-[#111111] bg-[#1e1e1e] text-[19px] leading-[22px] font-medium text-[#bdbdbd]">
        W
      </button>
    </div>
  );
}

function Headers() {
  return (
    <aside aria-label="Tracks" className="w-[284px] shrink-0">
      <TopControls />
      <div className="flex flex-col gap-1 bg-[#242424] py-1 pl-1">
        {TRACKS.map((t) => (
          <HeaderRow key={t.name} track={t} />
        ))}
        <div className="flex h-2.5 gap-1">
          <div className="flex-1 bg-[#363636]" />
          <div className="w-[42px] bg-[#363636]" />
        </div>
        <div className="mt-0.5">
          <HeaderRow track={{ name: 'Main', height: 'h-[34px]', color: 'bg-[#b9dde9]', ink: 'text-[#333d40]', icon: 'play', label: 'ml-[18px]', peak: 'h-0.5' }} />
        </div>
      </div>
      <BottomControls />
    </aside>
  );
}

export default function App() {
  return (
    <main className="min-h-screen bg-[#2b2b2b] pl-1 font-[Inter,'Liberation_Sans',sans-serif]">
      <div className="flex overflow-hidden rounded-xl border-t-2 border-r-2 border-b-4 border-l-4 border-[#777777] bg-[#363636]">
        <Timeline />
        <Headers />
      </div>
    </main>
  );
}
